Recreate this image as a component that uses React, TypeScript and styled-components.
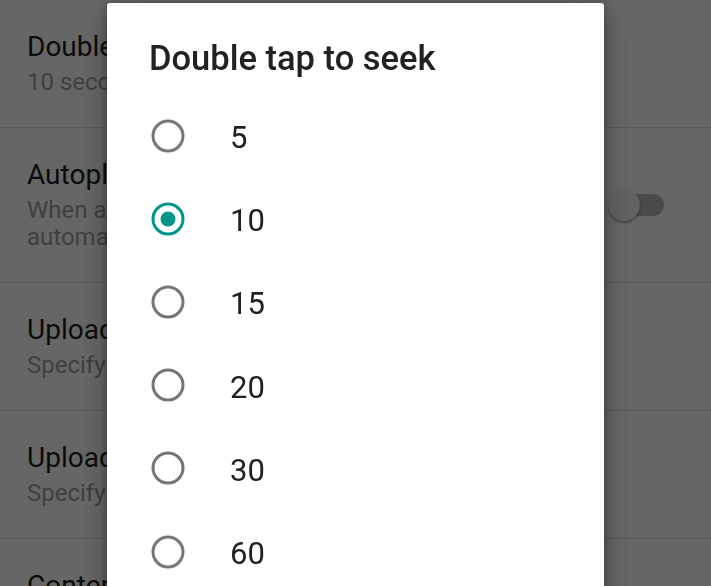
import React from 'react';
import styled, { createGlobalStyle } from 'styled-components';

const GlobalStyle = createGlobalStyle`
  html, body {
    margin: 0;
    width: 100%;
    height: 100%;
    overflow: hidden;
    background: #ffffff;
    font-family: Roboto, "Noto Sans", "Liberation Sans", sans-serif;
  }
`;

const SettingsList = styled.div`
  display: flex;
  flex-direction: column;
  width: 711px;
  height: 586px;
  overflow: hidden;
  background: #ffffff;
`;

const PrefItem = styled.div`
  display: flex;
  align-items: center;
  gap: 24px;
  padding: 31px 47px 31px 27px;
  border-bottom: 1px solid #e1e1e1;
  flex-shrink: 0;
`;

const PrefText = styled.div`
  flex: 1;
  min-width: 0;
  display: flex;
  flex-direction: column;
`;

const PrefTitle = styled.div`
  font-size: 28px;
  line-height: 32px;
  color: #1c1c1c;
  white-space: nowrap;
`;

const PrefSummary = styled.div`
  margin-top: 6px;
  font-size: 24px;
  line-height: 27px;
  color: #a0a0a0;
`;

const SwitchBox = styled.div`
  position: relative;
  width: 57px;
  height: 34px;
  flex-shrink: 0;
`;

const SwitchTrack = styled.div`
  position: absolute;
  left: 5px;
  top: 6px;
  width: 52px;
  height: 22px;
  border-radius: 11px;
  background: #b9b9b9;
`;

const SwitchThumb = styled.div`
  position: absolute;
  left: 1px;
  top: 1px;
  width: 32px;
  height: 32px;
  border-radius: 50%;
  background: #f5f5f5;
  box-shadow: 0 2px 3px rgba(0, 0, 0, 0.35);
`;

const Scrim = styled.div`
  position: fixed;
  inset: 0;
  background: rgba(0, 0, 0, 0.6);
`;

const Dialog = styled.div`
  position: fixed;
  left: 107px;
  top: 3px;
  width: 497px;
  bottom: -40px;
  background: #ffffff;
  border-radius: 3px;
  box-shadow: 0 10px 28px rgba(0, 0, 0, 0.35), 0 0 8px rgba(0, 0, 0, 0.25);
  display: flex;
  flex-direction: column;
`;

const DialogTitle = styled.h2`
  margin: 0;
  padding: 35px 42px 0;
  font-size: 34.5px;
  line-height: 40px;
  font-weight: 500;
  color: #212121;
`;

const OptionList = styled.div`
  display: flex;
  flex-direction: column;
  margin-top: 16px;
`;

const OptionRow = styled.div`
  display: flex;
  align-items: center;
  height: 83.2px;
  padding-left: 44px;
`;

const OptionLabel = styled.span`
  margin-left: 45px;
  margin-top: 4px;
  font-size: 31px;
  color: #212121;
`;

const RadioIcon: React.FC<{ checked: boolean }> = ({ checked }) => {
  const color = checked ? '#009688' : '#757575';
  return (
    <svg width="34" height="34" viewBox="0 0 34 34">
      <circle cx="17" cy="17" r="15" fill="none" stroke={color} strokeWidth="3" />
      {checked && <circle cx="17" cy="17" r="7.5" fill={color} />}
    </svg>
  );
};

const prefs = [
  { title: 'Double tap to seek', summary: '10 seconds' },
  {
    title: 'Autoplay',
    summary: 'When a video ends, a related video will play automatically',
    toggle: true,
  },
  { title: 'Upload quality on Wi-Fi', summary: 'Specify upload quality' },
  { title: 'Upload quality on mobile data', summary: 'Specify upload quality' },
  { title: 'Content location', summary: 'United States' },
];

const options = [5, 10, 15, 20, 30, 60];

export default function App() {
  return (
    <>
      <GlobalStyle />
      <SettingsList>
        {prefs.map((p) => (
          <PrefItem key={p.title}>
            <PrefText>
              <PrefTitle>{p.title}</PrefTitle>
              <PrefSummary>{p.summary}</PrefSummary>
            </PrefText>
            {p.toggle && (
              <SwitchBox>
                <SwitchTrack />
                <SwitchThumb />
              </SwitchBox>
            )}
          </PrefItem>
        ))}
      </SettingsList>
      <Scrim />
      <Dialog>
        <DialogTitle>Double tap to seek</DialogTitle>
        <OptionList>
          {options.map((n) => (
            <OptionRow key={n}>
              <RadioIcon checked={n === 10} />
              <OptionLabel>{n}</OptionLabel>
            </OptionRow>
          ))}
        </OptionList>
      </Dialog>
    </>
  );
}
